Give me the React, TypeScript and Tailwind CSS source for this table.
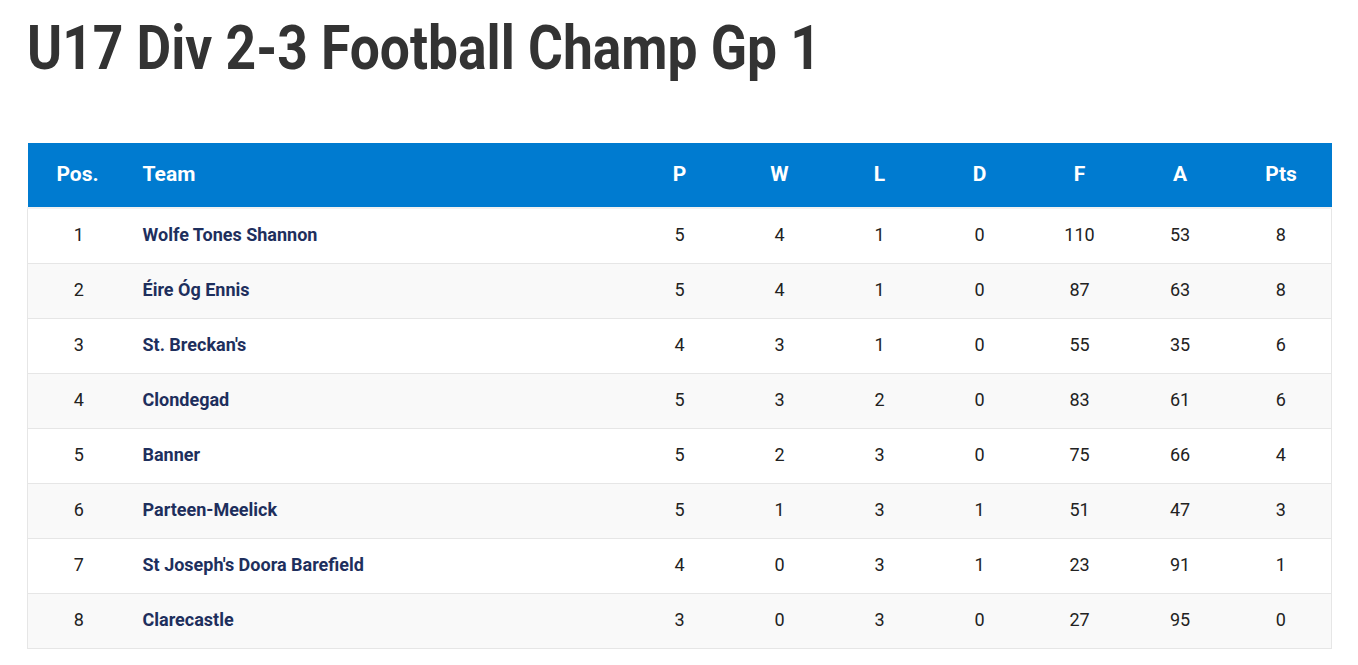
const rows = [
  { pos: 1, team: "Wolfe Tones Shannon", p: 5, w: 4, l: 1, d: 0, f: 110, a: 53, pts: 8 },
  { pos: 2, team: "Éire Óg Ennis", p: 5, w: 4, l: 1, d: 0, f: 87, a: 63, pts: 8 },
  { pos: 3, team: "St. Breckan's", p: 4, w: 3, l: 1, d: 0, f: 55, a: 35, pts: 6 },
  { pos: 4, team: "Clondegad", p: 5, w: 3, l: 2, d: 0, f: 83, a: 61, pts: 6 },
  { pos: 5, team: "Banner", p: 5, w: 2, l: 3, d: 0, f: 75, a: 66, pts: 4 },
  { pos: 6, team: "Parteen-Meelick", p: 5, w: 1, l: 3, d: 1, f: 51, a: 47, pts: 3 },
  { pos: 7, team: "St Joseph's Doora Barefield", p: 4, w: 0, l: 3, d: 1, f: 23, a: 91, pts: 1 },
  { pos: 8, team: "Clarecastle", p: 3, w: 0, l: 3, d: 0, f: 27, a: 95, pts: 0 },
];

const statCols = ["P", "W", "L", "D", "F", "A", "Pts"];

export default function App() {
  return (
    <div className="min-h-screen bg-white font-['Roboto',sans-serif] px-[27px]">
      <h1 className="pt-[12px] h-[143px] text-[62px] font-bold leading-[72px] text-[#333] origin-left scale-x-[0.86] whitespace-nowrap">
        U17 Div 2-3 Football Champ Gp 1
      </h1>

      <table className="w-[1304px] border-collapse table-fixed">
        <colgroup>
          <col className="w-[102px]" />
          <col className="w-[500px]" />
          <col className="w-[100px]" />
          <col className="w-[100px]" />
          <col className="w-[100px]" />
          <col className="w-[100px]" />
          <col className="w-[100px]" />
          <col className="w-[101px]" />
          <col className="w-[101px]" />
        </colgroup>
        <thead>
          <tr className="bg-[#007bd0] h-[65px] text-white text-[21px] font-bold border-b-2 border-[#f1f1f1]">
            <th className="text-center pr-[2px]">Pos.</th>
            <th className="text-left pl-[13px]">Team</th>
            {statCols.map((c) => (
              <th key={c} className="text-center">{c}</th>
            ))}
          </tr>
        </thead>
        <tbody>
          {rows.map((r, i) => (
            <tr
              key={r.pos}
              className={`h-[55px] border border-[#e6e6e6] text-[18px] text-[#222] ${i % 2 === 1 ? "bg-[#f9f9f9]" : "bg-white"}`}
            >
              <td className="text-center pb-[2px]">{r.pos}</td>
              <td className="pl-[13px] pb-[2px] font-bold text-[#1e2f5d]">{r.team}</td>
              <td className="text-center pb-[2px]">{r.p}</td>
              <td className="text-center pb-[2px]">{r.w}</td>
              <td className="text-center pb-[2px]">{r.l}</td>
              <td className="text-center pb-[2px]">{r.d}</td>
              <td className="text-center pb-[2px]">{r.f}</td>
              <td className="text-center pb-[2px]">{r.a}</td>
              <td className="text-center pb-[2px]">{r.pts}</td>
            </tr>
          ))}
        </tbody>
      </table>
    </div>
  );
}
